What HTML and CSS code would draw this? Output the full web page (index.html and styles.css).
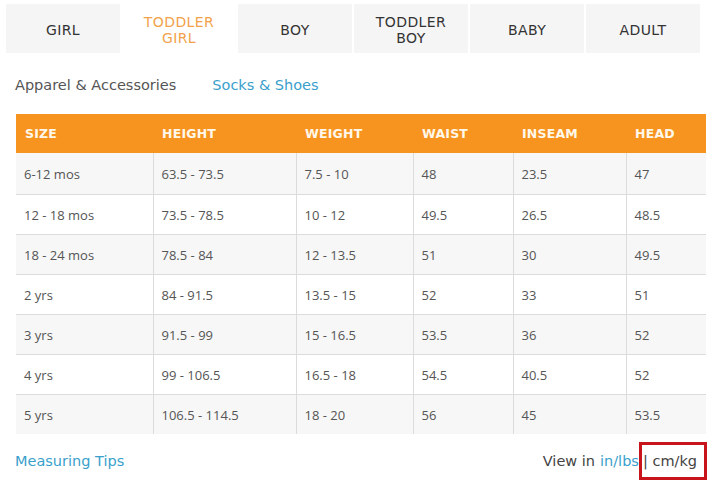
FILE: index.html
```html
<!DOCTYPE html>
<html>
<head>
<meta charset="utf-8">
<link rel="stylesheet" href="styles.css">
</head>
<body>
<div class="page">
  <nav class="tabs">
    <div class="tab">GIRL</div>
    <div class="tab active">TODDLER<br>GIRL</div>
    <div class="tab">BOY</div>
    <div class="tab">TODDLER<br>BOY</div>
    <div class="tab">BABY</div>
    <div class="tab">ADULT</div>
  </nav>
  <div class="subnav">
    <span class="sub current">Apparel &amp; Accessories</span>
    <a class="sub link">Socks &amp; Shoes</a>
  </div>
  <table class="chart">
    <colgroup>
      <col class="c1"><col class="c2"><col class="c3"><col class="c4"><col class="c5"><col class="c6">
    </colgroup>
    <thead>
      <tr><th>SIZE</th><th>HEIGHT</th><th>WEIGHT</th><th>WAIST</th><th>INSEAM</th><th>HEAD</th></tr>
    </thead>
    <tbody>
      <tr><td>6-12 mos</td><td>63.5 - 73.5</td><td>7.5 - 10</td><td>48</td><td>23.5</td><td>47</td></tr>
      <tr><td>12 - 18 mos</td><td>73.5 - 78.5</td><td>10 - 12</td><td>49.5</td><td>26.5</td><td>48.5</td></tr>
      <tr><td>18 - 24 mos</td><td>78.5 - 84</td><td>12 - 13.5</td><td>51</td><td>30</td><td>49.5</td></tr>
      <tr><td>2 yrs</td><td>84 - 91.5</td><td>13.5 - 15</td><td>52</td><td>33</td><td>51</td></tr>
      <tr><td>3 yrs</td><td>91.5 - 99</td><td>15 - 16.5</td><td>53.5</td><td>36</td><td>52</td></tr>
      <tr><td>4 yrs</td><td>99 - 106.5</td><td>16.5 - 18</td><td>54.5</td><td>40.5</td><td>52</td></tr>
      <tr><td>5 yrs</td><td>106.5 - 114.5</td><td>18 - 20</td><td>56</td><td>45</td><td>53.5</td></tr>
    </tbody>
  </table>
  <div class="footer">
    <a class="link tips">Measuring Tips</a>
    <div class="units">View in <a class="link">in/lbs</a><span class="selected">| cm/kg</span></div>
  </div>
</div>
</body>
</html>
```

FILE: styles.css
```css
html, body {
  margin: 0;
  padding: 0;
  background: #fff;
}
body {
  font-family: "DejaVu Sans", "Open Sans", sans-serif;
  color: #444;
}
.page {
  padding: 4px 0 0 6px;
  width: 713px;
}
.tabs {
  display: flex;
  gap: 2px;
}
.tab {
  width: 114px;
  height: 49px;
  padding-top: 2px;
  box-sizing: border-box;
  background: #f5f5f5;
  display: flex;
  align-items: center;
  justify-content: center;
  text-align: center;
  font-size: 14px;
  line-height: 16px;
  letter-spacing: 0.4px;
  color: #333;
}
.tab.active {
  background: #fff;
  color: #f2a24a;
}
.subnav {
  display: flex;
  gap: 36px;
  padding: 23px 0 0 9px;
  height: 39px;
  box-sizing: border-box;
  font-size: 14.5px;
  line-height: 18px;
}
.sub.current {
  color: #555;
}
.link {
  color: #3a9fcc;
  text-decoration: none;
}
.chart {
  margin: 22px 0 0 10px;
  border-collapse: collapse;
  table-layout: fixed;
  width: 690px;
  font-family: "Open Sans", "DejaVu Sans", sans-serif;
  font-size: 13px;
}
.c1 { width: 137px; }
.c2 { width: 143px; }
.c3 { width: 117px; }
.c4 { width: 100px; }
.c5 { width: 113px; }
.c6 { width: 80px; }
.chart th {
  background: #f7941f;
  color: #fff8ea;
  font-family: "DejaVu Sans", sans-serif;
  font-weight: bold;
  text-align: left;
  height: 39px;
  padding: 0 9px;
  font-size: 12.5px;
  letter-spacing: 0.2px;
}
.chart td {
  height: 39px;
  padding: 0 8px;
  color: #555;
  border-left: 1px solid #dcdcdc;
  border-top: 1px solid #dcdcdc;
}
.chart td:first-child {
  border-left: none;
}
.chart tbody tr:first-child td {
  border-top: none;
  height: 41px;
}
.chart tbody tr:nth-child(odd) td {
  background: #f7f7f7;
}
.footer {
  display: flex;
  justify-content: space-between;
  align-items: center;
  padding: 8px 0 0 9px;
  font-size: 14.5px;
  width: 701px;
  box-sizing: border-box;
}
.units {
  color: #444;
  display: flex;
  align-items: center;
}
.units .link {
  margin-left: 5px;
}
.selected {
  border: 3px solid #c8141b;
  height: 32px;
  display: inline-flex;
  align-items: center;
  padding: 0 7px 0 1px;
  margin-left: 0;
}
```
